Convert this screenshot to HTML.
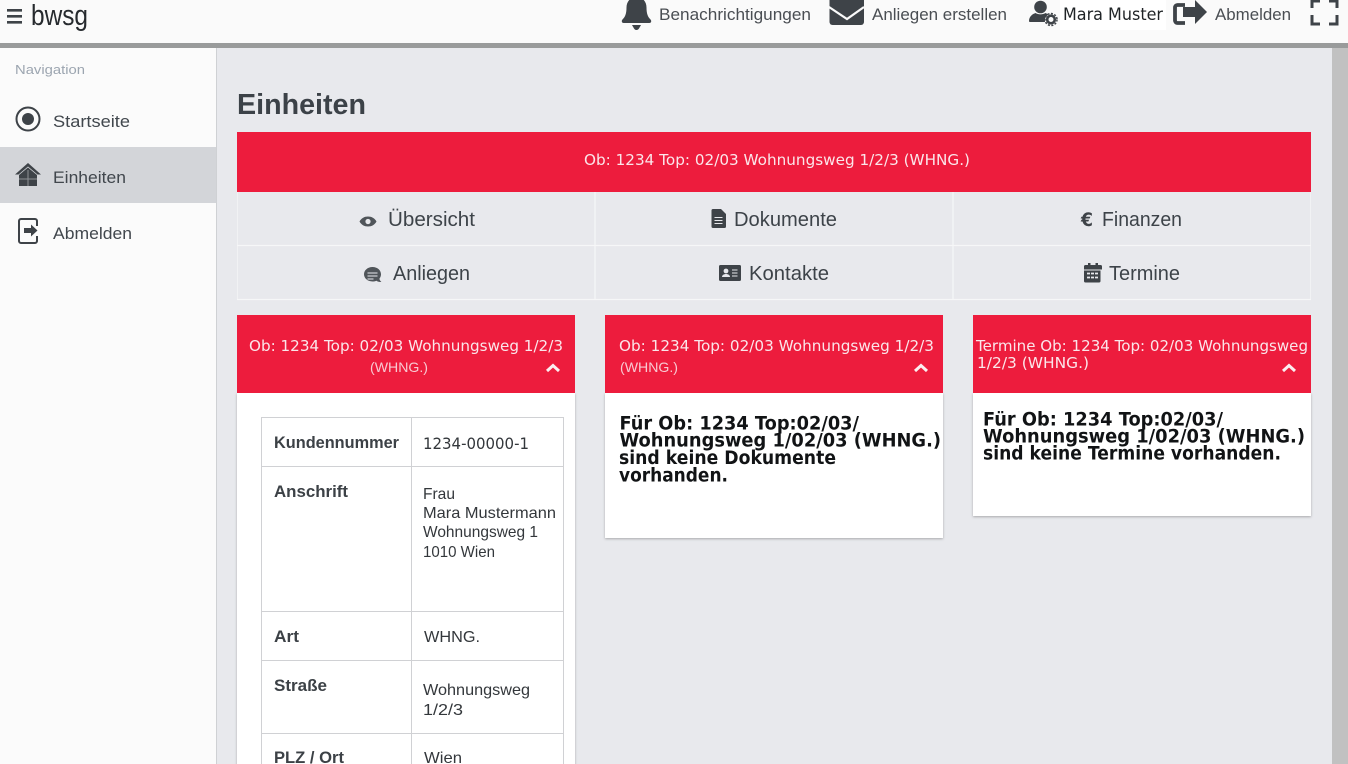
<!DOCTYPE html>
<html lang="de">
<head>
<meta charset="utf-8">
<title>Einheiten</title>
<style>
html,body{margin:0;padding:0;width:1348px;height:764px;overflow:hidden;background:#e8e9ed}
svg{display:block;position:absolute;left:0;top:0}
text{font-family:"Liberation Sans",sans-serif;white-space:pre}
.d{font-family:"DejaVu Sans",sans-serif}
.b{font-family:"DejaVu Sans",sans-serif;font-weight:bold;font-size:18.500px;fill:#111315}
.th{font-weight:bold;font-size:16.500px;fill:#3c4146}
.td{font-size:16px;fill:#33373b}
.tab{font-size:20px;fill:#3d4349}
.nav{font-size:16.500px;fill:#41474d}
.top{font-size:17px;fill:#4a4e53}
.hd{font-family:"DejaVu Sans",sans-serif;font-size:15px;fill:#fbe6ea}
.ic{fill:#3e4348}
.ln{stroke:#d0d1d4;stroke-width:1}
.wl{stroke:#f6f7f8;stroke-width:1.200}
.wo{stroke:#f1f2f4;stroke-width:1}
</style>
</head>
<body>
<svg width="1348" height="764" viewBox="0 0 1348 764" xmlns="http://www.w3.org/2000/svg">
<defs>
<filter id="s" x="-5%" y="-5%" width="110%" height="110%"><feDropShadow dx="0" dy="1" stdDeviation="1.200" flood-color="#000" flood-opacity=".28"/></filter>
</defs>
<rect width="1348" height="764" fill="#e8e9ed"/>

<!-- header -->
<rect width="1348" height="43" fill="#fafafa"/>
<rect y="43" width="1348" height="5" fill="#999b9b"/>
<rect x="1332" y="48" width="16" height="716" fill="#c1c1c1"/>
<path class="ic" d="M7 9h15v2.600H7zM7 15h15v2.600H7zM7 21h15v2.600H7z"/>
<text x="31" y="25" font-size="29" fill="#262a2e" textLength="57" lengthAdjust="spacingAndGlyphs">bwsg</text>

<!-- bell -->
<path class="ic" d="M636.500 -3c-6.500 0-10 5-10 10.500 0 6.500-1.500 9.500-4 12-1.300 1.400-.8 3.500 1.200 3.500h25.600c2 0 2.500-2.100 1.200-3.500-2.500-2.500-4-5.500-4-12 0-5.500-3.500-10.500-10-10.500z"/>
<path class="ic" d="M632 25h9l-2 3.500c-.6 1-1.500 1.500-2.500 1.500s-1.900-.5-2.500-1.500z"/>
<text class="top" x="659" y="20" textLength="152" lengthAdjust="spacingAndGlyphs">Benachrichtigungen</text>
<!-- envelope -->
<rect class="ic" x="829.500" y="-3" width="34.500" height="28" rx="3"/>
<path d="M829 7l18 12 17-12" fill="none" stroke="#fafafa" stroke-width="2.200"/>
<text class="top" x="872" y="20" textLength="135" lengthAdjust="spacingAndGlyphs">Anliegen erstellen</text>
<!-- user + gear -->
<circle class="ic" cx="1040.500" cy="7" r="6.300"/>
<path class="ic" d="M1029 21c0-4.500 3.500-7 6.500-8 3 1.800 7 1.800 10 0l3 1.500c-3 1.800-4 4.500-3.500 7.500h-15c-.7 0-1-.4-1-1z"/>
<circle cx="1051" cy="19.500" r="3.800" fill="none" stroke="#3e4348" stroke-width="2.600"/>
<circle cx="1051" cy="19.500" r="6" fill="none" stroke="#3e4348" stroke-width="1.500" stroke-dasharray="2 1.500"/>
<rect x="1060" y="0" width="106" height="30" fill="#fff"/>
<text class="d" x="1063" y="20" font-size="17" fill="#1f2326" textLength="100" lengthAdjust="spacingAndGlyphs">Mara Muster</text>
<!-- logout top -->
<path d="M1185 5h-7.500a2.500 2.500 0 0 0-2.500 2.500v13a2.500 2.500 0 0 0 2.500 2.500h7.500" fill="none" stroke="#3e4348" stroke-width="3.800"/>
<path class="ic" d="M1183 7h12V0l12 12-12 12v-7h-12z"/>
<text class="top" x="1215" y="20" textLength="76" lengthAdjust="spacingAndGlyphs">Abmelden</text>
<!-- fullscreen -->
<path d="M1312 8V0M1337 8V0M1312 15v9h8M1337 15v9h-8M1312 1h8M1337 1h-8" fill="none" stroke="#3e4348" stroke-width="3"/>

<!-- sidebar -->
<rect y="48" width="216" height="716" fill="#fbfbfb"/>
<rect x="216" y="48" width="1" height="716" fill="#cfd1d4"/>
<rect y="147" width="216" height="56" fill="#d3d5d9"/>
<text x="15" y="74" font-size="13" fill="#9ca5b0" textLength="70" lengthAdjust="spacingAndGlyphs">Navigation</text>

<circle cx="28" cy="119" r="11.500" fill="none" stroke="#3e4348" stroke-width="2"/>
<circle class="ic" cx="28" cy="119" r="6"/>
<text class="nav" x="53" y="127" textLength="77" lengthAdjust="spacingAndGlyphs">Startseite</text>

<path class="ic" d="M28 163l13 11.500h-3.500L28 166.500 18.500 174.500H15z"/>
<path class="ic" d="M19 175l9-7.500 9 7.500v11H19z"/>
<path d="M28 170v16M19 179h18" stroke="#8d9095" stroke-width="1"/>
<text class="nav" x="53" y="183" textLength="73" lengthAdjust="spacingAndGlyphs">Einheiten</text>

<path d="M37 226v-5a2 2 0 0 0-2-2H21a2 2 0 0 0-2 2v20a2 2 0 0 0 2 2h14a2 2 0 0 0 2-2v-5" fill="none" stroke="#3e4348" stroke-width="2"/>
<path class="ic" d="M24 228h7v-3.500l6.500 6-6.500 6V233h-7z"/>
<text class="nav" x="53" y="239" textLength="79" lengthAdjust="spacingAndGlyphs">Abmelden</text>

<!-- title -->
<text x="237" y="114" font-size="28.500" font-weight="bold" fill="#3c4248" textLength="129" lengthAdjust="spacingAndGlyphs">Einheiten</text>

<!-- red bar -->
<rect x="237" y="132" width="1074" height="60" fill="#ed1c3d"/>
<text class="hd" x="584" y="165" textLength="386" lengthAdjust="spacingAndGlyphs">Ob: 1234 Top: 02/03 Wohnungsweg 1/2/3 (WHNG.)</text>

<!-- tabs -->
<path class="wo" d="M237.500 192v108M1310.500 192v108"/>
<path class="wl" d="M595 192v108M953 192v108M237 245.500h1074M237 299.500h1074"/>
<path d="M359.500 221.500c2-3.500 5-5 8.500-5s6.500 1.500 8.500 5c-2 3.500-5 5-8.500 5s-6.500-1.500-8.500-5z" fill="#50555a"/>
<circle cx="368" cy="221.500" r="2.600" fill="#e8e9ed"/>
<text class="tab" x="388" y="226" textLength="87" lengthAdjust="spacingAndGlyphs">Übersicht</text>
<path class="ic" d="M713 209h8l5 5v12.500a1.500 1.500 0 0 1-1.500 1.500h-11.500a1.500 1.500 0 0 1-1.500-1.500V210.500a1.500 1.500 0 0 1 1.500-1.500z"/>
<path d="M714.500 217.500h8M714.500 220.500h8M714.500 223.500h8" stroke="#e8e9ed" stroke-width="1"/>
<text class="tab" x="734" y="226" textLength="103" lengthAdjust="spacingAndGlyphs">Dokumente</text>
<text class="d" x="1081" y="226" font-size="18.500" font-weight="bold" fill="#3e4348" textLength="12" lengthAdjust="spacingAndGlyphs">€</text>
<text class="tab" x="1102" y="226" textLength="80" lengthAdjust="spacingAndGlyphs">Finanzen</text>

<path d="M372.500 267c5 0 8.500 3.300 8.500 7.300 0 1.700-.6 3.200-1.600 4.400.2 1.300 1 2.300 2 3.300-2 0-3.800-.4-5-1.300-1.200.5-2.500.8-3.900.8-5 0-8.500-3.300-8.500-7.200s3.500-7.300 8.500-7.300z" fill="#50555a"/>
<path d="M367.500 273h10M367.500 276h10M367.500 279h6" stroke="#e8e9ed" stroke-width=".9"/>
<text class="tab" x="393" y="280" textLength="77" lengthAdjust="spacingAndGlyphs">Anliegen</text>
<rect class="ic" x="719" y="265" width="22" height="16" rx="1.500"/>
<circle cx="726" cy="271" r="2.400" fill="#e8e9ed"/>
<path d="M722 277c0-2 2-3 4-3s4 1 4 3z" fill="#e8e9ed"/>
<path d="M732 270h5.500M732 273h5.500M732 276h5.500" stroke="#e8e9ed" stroke-width="1"/>
<text class="tab" x="749" y="280" textLength="80" lengthAdjust="spacingAndGlyphs">Kontakte</text>
<path class="ic" d="M1085.500 265h2.500v-2h2.500v2h5v-2h2.500v2h2.500a1.500 1.500 0 0 1 1.500 1.500v3H1084v-3a1.500 1.500 0 0 1 1.500-1.500zM1084 270.500h16.500v10.500a1.500 1.500 0 0 1-1.500 1.500h-13.500a1.500 1.500 0 0 1-1.500-1.500z"/>
<path d="M1087 273.500h3M1091 273.500h3M1095 273.500h3M1087 277.500h3M1091 277.500h3M1095 277.500h3" stroke="#e8e9ed" stroke-width="1.800"/>
<text class="tab" x="1109" y="280" textLength="71" lengthAdjust="spacingAndGlyphs">Termine</text>

<!-- card 1 -->
<rect x="237" y="393" width="338" height="380" fill="#fff" filter="url(#s)"/>
<rect x="237" y="315" width="338" height="78" fill="#ed1c3d"/>
<text class="hd" x="249" y="351" textLength="314" lengthAdjust="spacingAndGlyphs">Ob: 1234 Top: 02/03 Wohnungsweg 1/2/3</text>
<text x="370" y="372" font-size="14" fill="#f8c9d2" textLength="58" lengthAdjust="spacingAndGlyphs">(WHNG.)</text>
<path d="M547 371l6-5.500 6 5.500" fill="none" stroke="#fbeef0" stroke-width="3"/>

<path class="ln" d="M261.500 417v347M411.500 417v347M563.500 417v347M261 417.500h303M261 466.500h303M261 611.500h303M261 660.500h303M261 733.500h303"/>
<text class="th" x="274" y="448" textLength="125" lengthAdjust="spacingAndGlyphs">Kundennummer</text>
<text class="td d" x="423" y="449" font-size="15" textLength="106" lengthAdjust="spacingAndGlyphs">1234-00000-1</text>
<text class="th" x="274" y="497" textLength="74" lengthAdjust="spacingAndGlyphs">Anschrift</text>
<text class="td" x="423" y="499" font-size="17" textLength="32" lengthAdjust="spacingAndGlyphs">Frau</text>
<text class="td" x="423" y="518" textLength="133" lengthAdjust="spacingAndGlyphs">Mara Mustermann</text>
<text class="td" x="423" y="537" textLength="115" lengthAdjust="spacingAndGlyphs">Wohnungsweg 1</text>
<text class="td" x="423" y="557" textLength="72" lengthAdjust="spacingAndGlyphs">1010 Wien</text>
<text class="th" x="274" y="642" textLength="25" lengthAdjust="spacingAndGlyphs">Art</text>
<text class="td" x="424" y="642" textLength="56" lengthAdjust="spacingAndGlyphs">WHNG.</text>
<text class="th" x="274" y="691" textLength="53" lengthAdjust="spacingAndGlyphs">Straße</text>
<text class="td" x="423" y="695" textLength="107" lengthAdjust="spacingAndGlyphs">Wohnungsweg</text>
<text class="td" x="423" y="715" textLength="40" lengthAdjust="spacingAndGlyphs">1/2/3</text>
<text class="th" x="274" y="763" textLength="70" lengthAdjust="spacingAndGlyphs">PLZ / Ort</text>
<text class="td" x="424" y="763" textLength="38" lengthAdjust="spacingAndGlyphs">Wien</text>

<!-- card 2 -->
<rect x="605" y="393" width="338" height="145" fill="#fff" filter="url(#s)"/>
<rect x="605" y="315" width="338" height="78" fill="#ed1c3d"/>
<text class="hd" x="619" y="351" textLength="315" lengthAdjust="spacingAndGlyphs">Ob: 1234 Top: 02/03 Wohnungsweg 1/2/3</text>
<text x="620" y="372" font-size="14" fill="#f8c9d2" textLength="58" lengthAdjust="spacingAndGlyphs">(WHNG.)</text>
<path d="M915 371l6-5.500 6 5.500" fill="none" stroke="#fbeef0" stroke-width="3"/>
<text class="b" x="619.500" y="429.500" textLength="239.500" lengthAdjust="spacingAndGlyphs">Für Ob: 1234 Top:02/03/</text>
<text class="b" x="619.500" y="446.500" textLength="321.500" lengthAdjust="spacingAndGlyphs">Wohnungsweg 1/02/03 (WHNG.)</text>
<text class="b" x="619" y="464" textLength="217" lengthAdjust="spacingAndGlyphs">sind keine Dokumente</text>
<text class="b" x="619" y="481.500" textLength="109" lengthAdjust="spacingAndGlyphs">vorhanden.</text>

<!-- card 3 -->
<rect x="973" y="393" width="338" height="123" fill="#fff" filter="url(#s)"/>
<rect x="973" y="315" width="338" height="78" fill="#ed1c3d"/>
<text class="hd" x="976" y="351" textLength="332" lengthAdjust="spacingAndGlyphs">Termine Ob: 1234 Top: 02/03 Wohnungsweg</text>
<text class="hd" x="977" y="368" textLength="112" lengthAdjust="spacingAndGlyphs">1/2/3 (WHNG.)</text>
<path d="M1283 371l6-5.500 6 5.500" fill="none" stroke="#fbeef0" stroke-width="3"/>
<text class="b" x="983" y="425.500" textLength="240" lengthAdjust="spacingAndGlyphs">Für Ob: 1234 Top:02/03/</text>
<text class="b" x="983" y="442.500" textLength="322" lengthAdjust="spacingAndGlyphs">Wohnungsweg 1/02/03 (WHNG.)</text>
<text class="b" x="983" y="459.500" textLength="298" lengthAdjust="spacingAndGlyphs">sind keine Termine vorhanden.</text>
</svg>
</body>
</html>
